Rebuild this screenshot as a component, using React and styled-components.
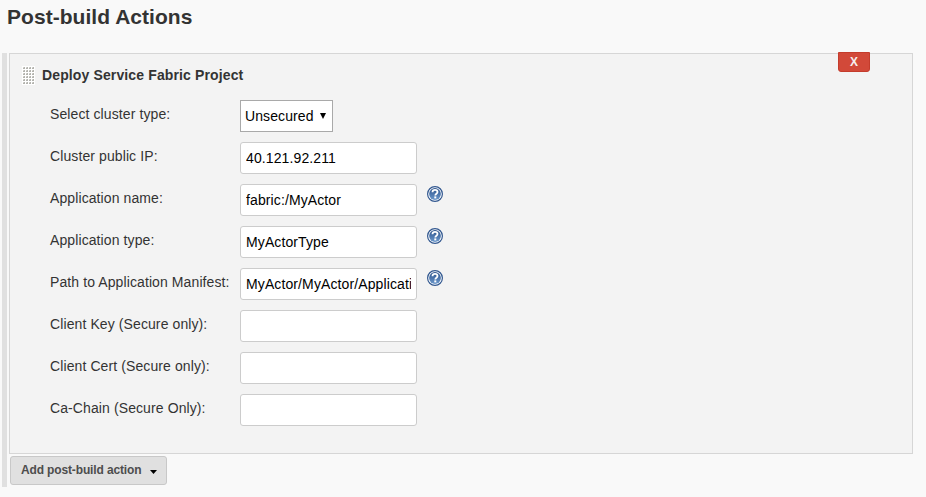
import React from "react";
import styled, { createGlobalStyle } from "styled-components";

const GlobalStyle = createGlobalStyle`
  * { box-sizing: border-box; }
  body {
    margin: 0;
    background: #f9f9f9;
    color: #333;
    font-family: "Liberation Sans", Arial, sans-serif;
    font-size: 14px;
    overflow: hidden;
  }
`;

const Page = styled.main`
  height: 497px;
  padding: 0 13px 10px 2px;
  display: flex;
  flex-direction: column;
`;

const Heading = styled.h1`
  margin: 0;
  height: 53px;
  padding: 4px 0 0 5px;
  font-size: 21px;
  line-height: 26px;
  letter-spacing: 0.04px;
`;

const Section = styled.section`
  flex: 1;
  min-height: 0;
  border-left: 5px solid #e0e0e0;
  padding-left: 2px;
  display: flex;
  flex-direction: column;
  align-items: flex-start;
`;

const Panel = styled.div`
  position: relative;
  width: 904px;
  height: 401px;
  flex: none;
  background: #f3f3f3;
  border: 1px solid #d6d6d6;
  padding: 12px 12px 0;
`;

const PanelHeader = styled.div`
  display: flex;
  align-items: center;
  gap: 7px;
  height: 19px;
  margin-bottom: 15px;
`;

const Grip = styled.svg`
  display: block;
  width: 13px;
  height: 19px;
`;

const PanelTitle = styled.h2`
  margin: 0;
  font-size: 14px;
  line-height: 19px;
  letter-spacing: 0.13px;
`;

const DeleteButton = styled.button`
  position: absolute;
  top: -2px;
  right: 42px;
  width: 32px;
  height: 20px;
  padding: 0;
  border: 1px solid #c43c2c;
  border-radius: 0 0 3px 3px;
  background: #d24939;
  color: #f6eeee;
  font: bold 12px/18px "Liberation Sans", Arial, sans-serif;
`;

const Fields = styled.div`
  display: flex;
  flex-direction: column;
  gap: 10px;
  padding-left: 28px;
`;

const FieldRow = styled.div`
  display: flex;
  height: 32px;
`;

const Label = styled.label`
  width: 190px;
  line-height: 29px;
  letter-spacing: 0.1px;
  white-space: nowrap;
`;

const Input = styled.input`
  width: 177px;
  height: 32px;
  padding: 0 5px 1px;
  border: 1px solid #ccc;
  border-radius: 3px;
  background: #fff;
  color: #000;
  font: 14px "Liberation Sans", Arial, sans-serif;
  letter-spacing: 0.11px;
`;

const Select = styled.div`
  display: flex;
  align-items: center;
  justify-content: space-between;
  width: 93px;
  height: 32px;
  padding: 0 6px 1px 4px;
  border: 1px solid #a9a9a9;
  background: #fff;
  color: #000;
  letter-spacing: 0.1px;
`;

const HelpSvg = styled.svg`
  width: 16px;
  height: 16px;
  margin: 2px 0 0 10px;
`;

const AddButton = styled.button`
  display: flex;
  align-items: center;
  gap: 9px;
  width: 157px;
  height: 29px;
  margin: 2px 0 0 1px;
  padding: 0 0 2px 10px;
  border: 1px solid #c8c8c8;
  border-radius: 3px;
  background: #e0e0e0;
  color: #4d4d4d;
  font: bold 12px "Liberation Sans", Arial, sans-serif;
  letter-spacing: -0.14px;
  white-space: nowrap;
`;

const Caret = styled.svg`
  width: 7px;
  height: 4px;
  margin-top: 4px;
`;

const SelectArrow = styled.svg`
  width: 6px;
  height: 6px;
`;

function HelpIcon() {
  return (
    <HelpSvg viewBox="0 0 16 16" role="img" aria-label="Help">
      <defs>
        <linearGradient id="helpFill" x1="0" y1="0" x2="0" y2="1">
          <stop offset="0" stopColor="#2c538c" />
          <stop offset="1" stopColor="#6c98cb" />
        </linearGradient>
      </defs>
      <circle cx="8" cy="8" r="7.4" fill="#fff" stroke="#31578f" strokeWidth="1.2" />
      <circle cx="8" cy="8" r="5.9" fill="url(#helpFill)" />
      <path d="M5.5 6.2C5.5 4.6 6.6 3.9 8 3.9c1.5 0 2.5.8 2.5 2.1 0 1.7-2.2 1.7-2.2 3.4" fill="none" stroke="#fff" strokeWidth="1.8" />
      <rect x="7.3" y="10.4" width="2" height="2" fill="#fff" />
    </HelpSvg>
  );
}

const dots = [0, 1, 2, 3, 4, 5].flatMap((row) => [0, 1, 2, 3].map((column) => [column * 3 + 1, row * 3 + 1]));

const fields = [
  { label: "Cluster public IP:", value: "40.121.92.211" },
  { label: "Application name:", value: "fabric:/MyActor", help: true },
  { label: "Application type:", value: "MyActorType", help: true },
  { label: "Path to Application Manifest:", value: "MyActor/MyActor/Applicati", help: true },
  { label: "Client Key (Secure only):", value: "" },
  { label: "Client Cert (Secure only):", value: "" },
  { label: "Ca-Chain (Secure Only):", value: "" },
];

export default function App() {
  return (
    <>
      <GlobalStyle />
      <Page>
        <Heading>Post-build Actions</Heading>
        <Section>
          <Panel>
            <PanelHeader>
              <Grip viewBox="0 0 13 19" shapeRendering="crispEdges">
                <rect width="13" height="19" fill="#fff" />
                {dots.map(([x, y]) => (
                  <g key={`${x}-${y}`}>
                    <rect x={x} y={y} width="2" height="2" fill="#d2d2cd" />
                    <path d={`M${x + 1} ${y}h1v2h-2v-1h1z`} fill="#b3b3ae" />
                  </g>
                ))}
              </Grip>
              <PanelTitle>Deploy Service Fabric Project</PanelTitle>
            </PanelHeader>
            <DeleteButton>X</DeleteButton>
            <Fields>
              <FieldRow>
                <Label>Select cluster type:</Label>
                <Select role="combobox">
                  Unsecured
                  <SelectArrow viewBox="0 0 6 6"><path d="M0 0h6L3 6z" /></SelectArrow>
                </Select>
              </FieldRow>
              {fields.map(({ label, value, help }) => (
                <FieldRow key={label}>
                  <Label>{label}</Label>
                  <Input defaultValue={value} aria-label={label} />
                  {help && <HelpIcon />}
                </FieldRow>
              ))}
            </Fields>
          </Panel>
          <AddButton>
            Add post-build action
            <Caret viewBox="0 0 7 4"><path d="M0 0h7L3.5 4z" /></Caret>
          </AddButton>
        </Section>
      </Page>
    </>
  );
}
